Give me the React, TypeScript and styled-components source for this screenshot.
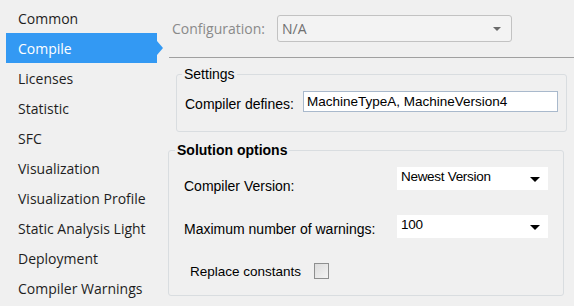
import styled, { createGlobalStyle } from 'styled-components'

const GlobalStyle = createGlobalStyle`
  html, body {
    margin: 0;
    padding: 0;
    background: #f0f0f0;
  }
  body {
    width: 574px;
    height: 306px;
    overflow: hidden;
  }
`

const Page = styled.div`
  display: grid;
  grid-template-columns: 165px 1fr;
  height: 306px;
  background: #f0f0f0;
`

const Nav = styled.ul`
  margin: 0;
  padding: 3px 0 0 0;
  list-style: none;
`

const NavItem = styled.li<{ $active?: boolean }>`
  position: relative;
  height: 30px;
  margin-left: 6px;
  margin-right: 8px;
  padding-left: 12px;
  display: flex;
  align-items: center;
  font-family: 'Open Sans', 'Noto Sans', sans-serif;
  font-size: 14px;
  color: ${(p) => (p.$active ? '#ffffff' : '#1e1e1e')};
  background: ${(p) => (p.$active ? '#3399f3' : 'transparent')};

  ${(p) =>
    p.$active &&
    `
    &::after {
      content: '';
      position: absolute;
      right: -6px;
      top: 8px;
      border-top: 7px solid transparent;
      border-bottom: 7px solid transparent;
      border-left: 6px solid #3399f3;
    }
  `}
`

const Content = styled.div`
  display: flex;
  flex-direction: column;
`

const ConfigRow = styled.div`
  display: flex;
  align-items: center;
  gap: 10px;
  margin-top: 15px;
  padding-left: 7px;
`

const ConfigLabel = styled.span`
  font-family: 'Open Sans', 'Noto Sans', sans-serif;
  font-size: 14px;
  color: #8a8a8a;
  width: 95px;
`

const ConfigSelect = styled.div`
  box-sizing: border-box;
  width: 235px;
  height: 27px;
  border: 1px solid #c2c2c2;
  border-radius: 3px;
  background: #f3f3f3;
  display: flex;
  align-items: center;
  justify-content: space-between;
  padding: 0 10px 0 4px;
  font-family: 'Open Sans', 'Noto Sans', sans-serif;
  font-size: 14px;
  color: #707070;
`

const SmallArrow = styled.span<{ $color?: string; $size?: number }>`
  width: 0;
  height: 0;
  border-left: ${(p) => p.$size ?? 4}px solid transparent;
  border-right: ${(p) => p.$size ?? 4}px solid transparent;
  border-top: ${(p) => p.$size ?? 4}px solid ${(p) => p.$color ?? '#6a6a6a'};
`

const Separator = styled.div`
  height: 1px;
  background: #a0a0a0;
  margin: 15px 0 0 4px;
`

const Group = styled.fieldset<{ $left: number; $right: number; $height: number }>`
  box-sizing: border-box;
  margin: 0 ${(p) => p.$right}px 0 ${(p) => p.$left}px;
  padding: 0;
  height: ${(p) => p.$height}px;
  border: 1px solid #d9dde0;
  border-radius: 3px;
  min-width: 0;
`

const Legend = styled.legend<{ $bold?: boolean; $offset: number }>`
  margin-left: ${(p) => p.$offset}px;
  padding: 0 2px;
  font-family: 'Liberation Sans', Arial, sans-serif;
  font-size: 14px;
  font-weight: ${(p) => (p.$bold ? 700 : 400)};
  color: #000;
  line-height: 16px;
`

const Row = styled.div<{ $top: number; $left: number }>`
  display: flex;
  align-items: center;
  margin-top: ${(p) => p.$top}px;
  padding-left: ${(p) => p.$left}px;
`

const Label = styled.span<{ $width?: number; $shift?: number; $size?: number }>`
  font-family: 'Liberation Sans', Arial, sans-serif;
  font-size: ${(p) => p.$size ?? 14}px;
  color: #000;
  width: ${(p) => (p.$width ? `${p.$width}px` : 'auto')};
  position: relative;
  top: ${(p) => p.$shift ?? 0}px;
`

const TextInput = styled.div`
  box-sizing: border-box;
  width: 255px;
  height: 21px;
  border: 1px solid #a9b9cc;
  background: #fff;
  padding: 1px 3px;
  font-family: 'Liberation Sans', Arial, sans-serif;
  font-size: 13.5px;
  line-height: 17px;
  color: #000;
`

const FlatSelect = styled.div`
  box-sizing: border-box;
  width: 151px;
  height: 23px;
  background: #fff;
  display: flex;
  justify-content: space-between;
  padding: 2px 8px 0 4px;
  font-family: 'Liberation Sans', Arial, sans-serif;
  font-size: 13.5px;
  letter-spacing: -0.3px;
  color: #000;

  & > span:last-child {
    margin-top: 8px;
  }
`

const Checkbox = styled.span`
  box-sizing: border-box;
  width: 15px;
  height: 16px;
  margin-left: 13px;
  border: 1px solid #8e8f8f;
  background: linear-gradient(135deg, #dcdcdc 0%, #f4f4f4 100%);
`

const navItems = [
  'Common',
  'Compile',
  'Licenses',
  'Statistic',
  'SFC',
  'Visualization',
  'Visualization Profile',
  'Static Analysis Light',
  'Deployment',
  'Compiler Warnings',
]

const App = () => {
  return (
    <>
      <GlobalStyle />
      <Page>
        <Nav>
          {navItems.map((item) => (
            <NavItem key={item} $active={item === 'Compile'}>
              {item}
            </NavItem>
          ))}
        </Nav>
        <Content>
          <ConfigRow>
            <ConfigLabel>Configuration:</ConfigLabel>
            <ConfigSelect>
              N/A
              <SmallArrow />
            </ConfigSelect>
          </ConfigRow>
          <Separator />
          <div style={{ height: 8 }} />
          <Group $left={11} $right={7} $height={66}>
            <Legend $offset={5}>Settings</Legend>
            <Row $top={9} $left={8}>
              <Label $width={118} $shift={2}>Compiler defines:</Label>
              <TextInput>MachineTypeA, MachineVersion4</TextInput>
            </Row>
          </Group>
          <div style={{ height: 10 }} />
          <Group $left={3} $right={10} $height={154}>
            <Legend $bold $offset={6}>Solution options</Legend>
            <Row $top={9} $left={15}>
              <Label $width={213} $shift={7}>Compiler Version:</Label>
              <FlatSelect>
                <span>Newest Version</span>
                <SmallArrow $color="#000" $size={5} />
              </FlatSelect>
            </Row>
            <Row $top={25} $left={15}>
              <Label $width={213} $shift={2}>Maximum number of warnings:</Label>
              <FlatSelect>
                <span>100</span>
                <SmallArrow $color="#000" $size={5} />
              </FlatSelect>
            </Row>
            <Row $top={25} $left={21}>
              <Label $size={13.5}>Replace constants</Label>
              <Checkbox />
            </Row>
          </Group>
        </Content>
      </Page>
    </>
  )
}

export default App
